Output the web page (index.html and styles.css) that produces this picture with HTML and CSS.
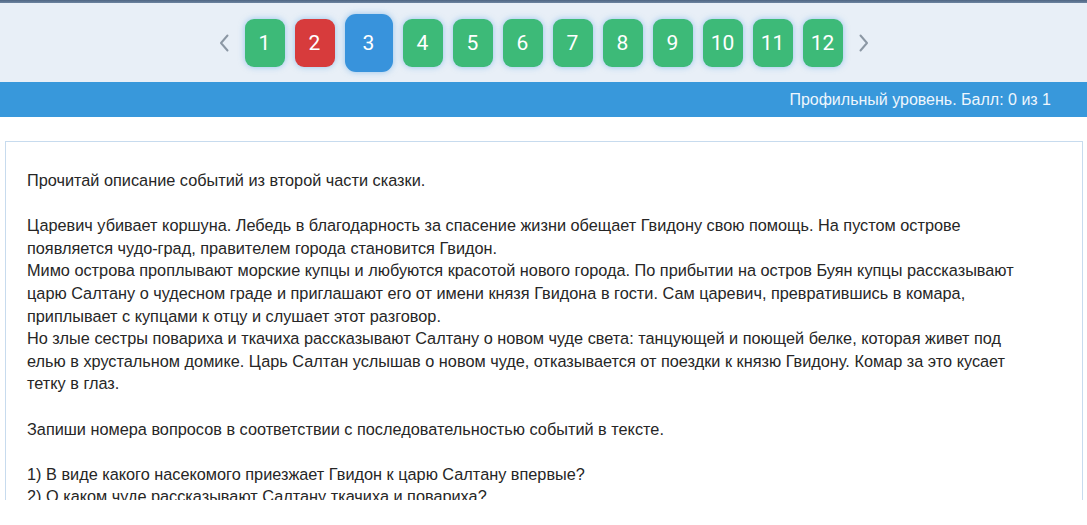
FILE: index.html
```html
<!DOCTYPE html>
<html lang="ru">
<head>
<meta charset="utf-8">
<title>Задание 3</title>
<link rel="stylesheet" href="styles.css">
</head>
<body>
<div class="page">
  <div class="topline"></div>
  <nav class="pager">
    <span class="chev">
      <svg width="10" height="18" viewBox="0 0 10 18"><polyline points="8.5,1.5 2,9 8.5,16.5" fill="none" stroke="#8b97a4" stroke-width="2" stroke-linecap="round" stroke-linejoin="round"/></svg>
    </span>
    <div class="pages">
      <a class="pg ok">1</a>
      <a class="pg bad">2</a>
      <a class="pg cur">3</a>
      <a class="pg ok">4</a>
      <a class="pg ok">5</a>
      <a class="pg ok">6</a>
      <a class="pg ok">7</a>
      <a class="pg ok">8</a>
      <a class="pg ok">9</a>
      <a class="pg ok">10</a>
      <a class="pg ok">11</a>
      <a class="pg ok">12</a>
    </div>
    <span class="chev">
      <svg width="10" height="18" viewBox="0 0 10 18"><polyline points="1.5,1.5 8,9 1.5,16.5" fill="none" stroke="#8b97a4" stroke-width="2" stroke-linecap="round" stroke-linejoin="round"/></svg>
    </span>
  </nav>
  <div class="bar">Профильный уровень. Балл: 0 из 1</div>
  <section class="task">
    <p>Прочитай описание событий из второй части сказки.</p>
    <p>Царевич убивает коршуна. Лебедь в благодарность за спасение жизни обещает Гвидону свою помощь. На пустом острове<br>
    появляется чудо-град, правителем города становится Гвидон.<br>
    Мимо острова проплывают морские купцы и любуются красотой нового города. По прибытии на остров Буян купцы рассказывают<br>
    царю Салтану о чудесном граде и приглашают его от имени князя Гвидона в гости. Сам царевич, превратившись в комара,<br>
    приплывает с купцами к отцу и слушает этот разговор.<br>
    Но злые сестры повариха и ткачиха рассказывают Салтану о новом чуде света: танцующей и поющей белке, которая живет под<br>
    елью в хрустальном домике. Царь Салтан услышав о новом чуде, отказывается от поездки к князю Гвидону. Комар за это кусает<br>
    тетку в глаз.</p>
    <p>Запиши номера вопросов в соответствии с последовательностью событий в тексте.</p>
    <p>1) В виде какого насекомого приезжает Гвидон к царю Салтану впервые?<br>
    2) О каком чуде рассказывают Салтану ткачиха и повариха?</p>
  </section>
</div>
</body>
</html>
```

FILE: styles.css
```css
* { box-sizing: border-box; }
html, body { margin: 0; padding: 0; background: #ffffff; }
body { font-family: "Liberation Sans", Arial, sans-serif; }

.page {
  height: 500px;
  overflow: hidden;
  background: #ffffff;
}

.topline {
  height: 3px;
  background: linear-gradient(#4f6683, #6c83a0);
}

.pager {
  height: 79px;
  background: #e8eff7;
  display: flex;
  align-items: center;
  justify-content: center;
  gap: 16px;
}

.chev {
  display: flex;
  align-items: center;
  width: 10px;
  height: 18px;
}
.chev svg { display: block; }

.pages {
  display: flex;
  align-items: center;
  gap: 10px;
}

.pg {
  width: 40px;
  height: 48px;
  border-radius: 9px;
  display: flex;
  align-items: center;
  justify-content: center;
  color: #ffffff;
  font-family: Roboto, "Liberation Sans", sans-serif;
  font-size: 21px;
  box-shadow: 0 0 6px rgba(80, 160, 225, 0.55);
}
.pg.ok { background: #3dba78; }
.pg.bad { background: #d73b3c; }
.pg.cur {
  width: 48px;
  height: 58px;
  border-radius: 11px;
  background: #3893dc;
}

.bar {
  height: 35px;
  background: #3898db;
  color: #eef6fd;
  font-size: 16px;
  display: flex;
  align-items: center;
  justify-content: flex-end;
  padding-right: 36px;
}

.task {
  margin: 24px 4px 0 5px;
  border: 1px solid #c7dbee;
  padding: 27px 20px 40px 21px;
  min-height: 420px;
  color: #262626;
  font-size: 16.3px;
  line-height: 22.6px;
}
.task p { margin: 0 0 22.6px 0; }
```
